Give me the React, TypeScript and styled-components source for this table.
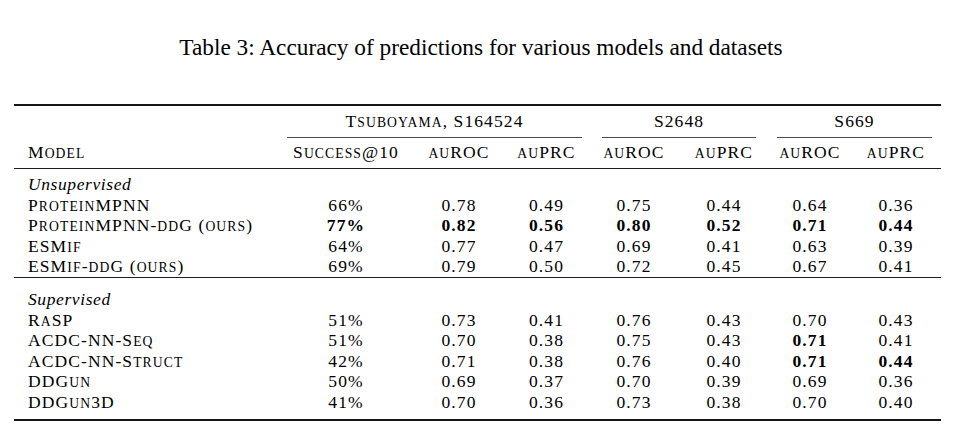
import React from 'react';
import styled, { createGlobalStyle } from 'styled-components';

const GlobalStyle = createGlobalStyle`
  html, body {
    margin: 0;
    padding: 0;
    background: #fff;
  }
  body {
    font-family: "Liberation Serif", "Times New Roman", serif;
    color: #000;
  }
`;

// column widths line up the cells under the group rules
const COLS = '273px 118px 108px 67px 108px 72px 100px 72px';

type Row = { name: string; values: (string | [string, boolean])[] };

const unsupervised: Row[] = [
  { name: 'ProteinMPNN', values: ['66%', '0.78', '0.49', '0.75', '0.44', '0.64', '0.36'] },
  {
    name: 'ProteinMPNN-ddG (ours)',
    values: [
      ['77%', true],
      ['0.82', true],
      ['0.56', true],
      ['0.80', true],
      ['0.52', true],
      ['0.71', true],
      ['0.44', true],
    ],
  },
  { name: 'ESMif', values: ['64%', '0.77', '0.47', '0.69', '0.41', '0.63', '0.39'] },
  { name: 'ESMif-ddG (ours)', values: ['69%', '0.79', '0.50', '0.72', '0.45', '0.67', '0.41'] },
];

const supervised: Row[] = [
  { name: 'RaSP', values: ['51%', '0.73', '0.41', '0.76', '0.43', '0.70', '0.43'] },
  { name: 'ACDC-NN-Seq', values: ['51%', '0.70', '0.38', '0.75', '0.43', ['0.71', true], '0.41'] },
  {
    name: 'ACDC-NN-Struct',
    values: ['42%', '0.71', '0.38', '0.76', '0.40', ['0.71', true], ['0.44', true]],
  },
  { name: 'DDGun', values: ['50%', '0.69', '0.37', '0.70', '0.39', '0.69', '0.36'] },
  { name: 'DDGun3D', values: ['41%', '0.70', '0.36', '0.73', '0.38', '0.70', '0.40'] },
];

const metrics = ['Success@10', 'auROC', 'auPRC', 'auROC', 'auPRC', 'auROC', 'auPRC'];

// LaTeX-style small caps: lower-case runs get set as smaller capitals
const smallCaps = (text: string) =>
  text.split(/([a-z]+)/).map((part, i) =>
    /^[a-z]+$/.test(part) ? <Sc key={i}>{part}</Sc> : <React.Fragment key={i}>{part}</React.Fragment>
  );

const App = () => {
  const renderRows = (rows: Row[]) =>
    rows.map((row) => (
      <Line key={row.name}>
        <NameCell>{smallCaps(row.name)}</NameCell>
        {row.values.map((v, i) => {
          const [text, bold] = typeof v === 'string' ? [v, false] : v;
          return (
            <Cell key={i} $bold={bold}>
              {text}
            </Cell>
          );
        })}
      </Line>
    ));

  return (
    <>
      <GlobalStyle />
      <Page>
        <Caption>Table 3: Accuracy of predictions for various models and datasets</Caption>
        <Table>
          <Rule $thick={2} $tone="#161616" />
          <Line $top={5} $bottom={0}>
            <span />
            <GroupHead $span="2 / 5" $left={0} $right={-2}>
              {smallCaps('Tsuboyama, S164524')}
            </GroupHead>
            <GroupHead $span="5 / 7" $left={22} $right={4}>
              S2648
            </GroupHead>
            <GroupHead $span="7 / 9" $left={17} $right={0}>
              S669
            </GroupHead>
          </Line>
          <Line $top={4} $bottom={5.5}>
            <NameCell>{smallCaps('Model')}</NameCell>
            {metrics.map((m, i) => (
              <Cell key={i}>{smallCaps(m)}</Cell>
            ))}
          </Line>
          <Rule $thick={1} $tone="#1e1e1e" />
          <Section $top={5} $bottom={0.5}>
            <SectionLabel>Unsupervised</SectionLabel>
            {renderRows(unsupervised)}
          </Section>
          <Rule $thick={1} $tone="#1e1e1e" />
          <Section $top={11} $bottom={7}>
            <SectionLabel>Supervised</SectionLabel>
            {renderRows(supervised)}
          </Section>
          <Rule $thick={2} $tone="#161616" />
        </Table>
      </Page>
    </>
  );
};

export default App;

const Page = styled.div`
  width: 960px;
  height: 438px;
  box-sizing: border-box;
  padding-top: 33px;
  overflow: hidden;
  font-family: "Liberation Serif", "Times New Roman", serif;
`;

const Caption = styled.div`
  font-size: 23.3px;
  line-height: 28px;
  text-align: center;
  padding-left: 2px;
`;

const Table = styled.div`
  width: 927px;
  margin: 43px 0 0 14px;
  font-size: 17.5px;
  line-height: 20.5px;
  letter-spacing: 1.1px;
`;

const Sc = styled.span`
  font-size: 0.78em;
  line-height: 0;
  text-transform: uppercase;
`;

const Rule = styled.div<{ $thick: number; $tone: string }>`
  height: ${(p) => p.$thick}px;
  background: ${(p) => p.$tone};
`;

const Line = styled.div<{ $top?: number; $bottom?: number }>`
  display: grid;
  grid-template-columns: ${COLS};
  padding: ${(p) => p.$top ?? 0}px 0 ${(p) => p.$bottom ?? 0}px;
`;

const Section = styled.div<{ $top: number; $bottom: number }>`
  padding: ${(p) => p.$top}px 0 ${(p) => p.$bottom}px;
`;

const SectionLabel = styled.div`
  padding-left: 14px;
  font-style: italic;
  letter-spacing: 0.6px;
`;

const NameCell = styled.div`
  padding-left: 14px;
  white-space: nowrap;
`;

const Cell = styled.div<{ $bold?: boolean }>`
  text-align: center;
  font-weight: ${(p) => (p.$bold ? 700 : 400)};
  white-space: nowrap;
`;

const GroupHead = styled.div<{ $span: string; $left: number; $right: number }>`
  grid-column: ${(p) => p.$span};
  margin: 0 ${(p) => p.$right}px 0 ${(p) => p.$left}px;
  padding-bottom: 5.5px;
  border-bottom: 1px solid #4a4a4a;
  text-align: center;
  white-space: nowrap;
`;
